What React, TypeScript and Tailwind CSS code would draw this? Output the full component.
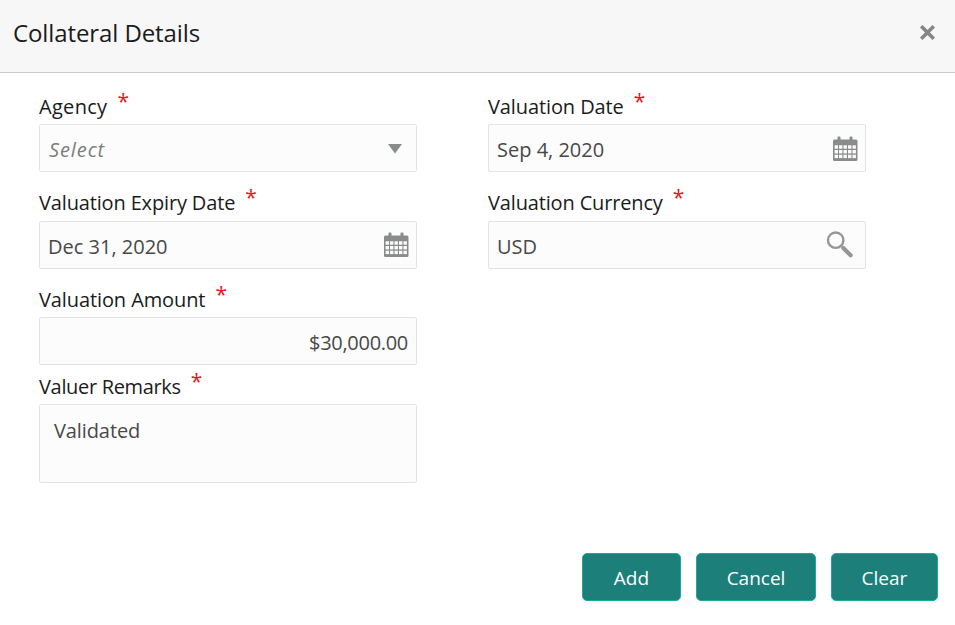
import type { ReactNode } from 'react'
import clsx from 'clsx'

function CalendarIcon() {
  return (
    <svg width="26" height="26" viewBox="0 0 26 26" fill="#8a8c8b">
      <rect x="4.5" y="0.5" width="3" height="5" rx="1" />
      <rect x="16.5" y="0.5" width="3" height="5" rx="1" />
      <rect x="0" y="3.5" width="24.5" height="21.5" rx="1.5" />
      <g fill="#fcfcfc">
        {[9.3, 14, 18.7].map((y) =>
          [1.6, 6, 10.5, 15, 19.5].map((x) => (
            <rect key={`${x}-${y}`} x={x} y={y} width="3.4" height="3.4" />
          ))
        )}
      </g>
    </svg>
  )
}

function SearchIcon() {
  return (
    <svg width="28" height="28" viewBox="0 0 28 28" fill="none" stroke="#969794">
      <circle cx="9.7" cy="9.2" r="7.7" strokeWidth="2.4" />
      <path d="M17.3 17 24.6 24.3" strokeWidth="4.2" strokeLinecap="round" />
    </svg>
  )
}

interface FieldProps {
  label: string
  labelClass?: string
  className?: string
  boxClass?: string
  children: ReactNode
}

function Field({ label, labelClass, className, boxClass = 'mt-[5px] h-12 items-center pl-2', children }: FieldProps) {
  return (
    <div className={className}>
      <div className="flex h-[27px] items-start text-[20px] leading-[27px] text-[#1b1b1b]">
        <span className={clsx('whitespace-nowrap pt-px', labelClass)}>{label}</span>
        <span className="-mt-1 ml-[10px] text-[21px] leading-[27px] text-[#f0141e]">*</span>
      </div>
      <div
        className={clsx(
          'flex w-[378px] rounded-[2px] border border-[#e2e4e4] bg-[#fcfcfc] text-[20px] leading-[27px] text-[#484848]',
          boxClass
        )}
      >
        {children}
      </div>
    </div>
  )
}

const buttons = [
  { label: 'Add', width: 'w-[99px]' },
  { label: 'Cancel', width: 'w-[120px]' },
  { label: 'Clear', width: 'w-[107px]' },
]

export default function App() {
  return (
    <div className="flex h-[625px] w-[955px] flex-col bg-white font-['Open_Sans','Noto_Sans',sans-serif]">
      <header className="flex h-[73px] shrink-0 items-start justify-between border-b border-[#cbcbcb] bg-[#f7f7f7] pl-[13px] pr-5 text-[#1b1b1b]">
        <h1 className="mt-4 text-[24px] leading-[33px] tracking-[-0.1px]">Collateral Details</h1>
        <button aria-label="Close" className="mt-[25px]">
          <svg width="15" height="15" viewBox="0 0 15 15" stroke="#858787" strokeWidth="3.6">
            <path d="M1.2 1.2 13.8 13.8M13.8 1.2 1.2 13.8" />
          </svg>
        </button>
      </header>

      <main className="flex grow items-start gap-[71px] pl-[39px] pt-[19px]">
        <div className="flex flex-col">
          <Field label="Agency" labelClass="tracking-[0.3px]">
            <span className="grow pl-px pt-0.5 italic tracking-[0.9px] text-[#7c7c7c]">Select</span>
            <svg width="14" height="10" viewBox="0 0 14 10" className="mr-[14px] mt-0.5" fill="#8a8c8b">
              <path d="M0 0h14L7 9.5z" />
            </svg>
          </Field>
          <Field
            label="Valuation Expiry Date"
            labelClass="tracking-[-0.15px]"
            className="mt-4"
            boxClass="mt-1.5 h-12 items-center pl-2"
          >
            <span className="grow pt-0.5">Dec 31, 2020</span>
            <div className="mr-[6px]"><CalendarIcon /></div>
          </Field>
          <Field
            label="Valuation Amount"
            labelClass="tracking-[-0.1px]"
            className="mt-4"
            boxClass="mt-[5px] h-12 items-center justify-end pr-2"
          >
            <span className="pt-0.5 tracking-[-0.3px]">$30,000.00</span>
          </Field>
          <Field
            label="Valuer Remarks"
            labelClass="tracking-[-0.33px]"
            className="mt-[7px]"
            boxClass="mt-[5px] h-[79px] pl-[14px] pt-3"
          >
            <span className="tracking-[-0.1px]">Validated</span>
          </Field>
        </div>
        <div className="flex flex-col">
          <Field label="Valuation Date" labelClass="tracking-[-0.1px]">
            <span className="grow pt-0.5">Sep 4, 2020</span>
            <div className="mr-[6px] mt-px"><CalendarIcon /></div>
          </Field>
          <Field
            label="Valuation Currency"
            labelClass="tracking-[-0.15px]"
            className="mt-4"
            boxClass="mt-1.5 h-12 items-center pl-2"
          >
            <span className="grow pt-0.5">USD</span>
            <div className="mr-[11px]"><SearchIcon /></div>
          </Field>
        </div>
      </main>

      <footer className="flex shrink-0 justify-end gap-[15px] pb-6 pr-[17px]">
        {buttons.map((b) => (
          <button
            key={b.label}
            className={clsx('h-12 rounded-[5px] border border-[#17ac9c] bg-[#1c7f7a] pt-0.5 text-[19px] text-white', b.width)}
          >
            {b.label}
          </button>
        ))}
      </footer>
    </div>
  )
}
